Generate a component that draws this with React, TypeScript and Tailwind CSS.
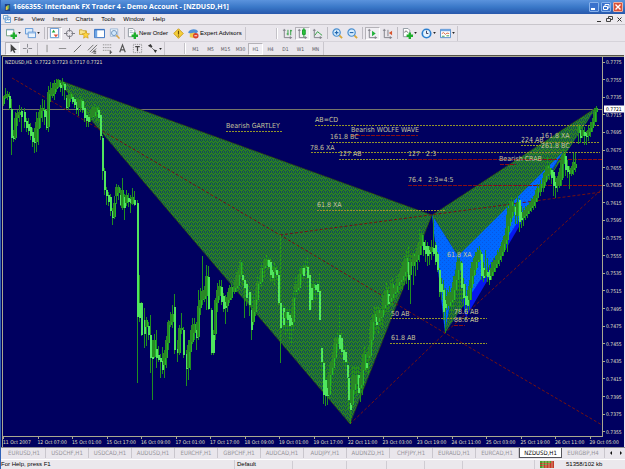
import React, { useState } from 'react';
import clsx from 'clsx';

const menus = ['File', 'View', 'Insert', 'Charts', 'Tools', 'Window', 'Help'];

const periods = ['M1', 'M5', 'M15', 'M30', 'H1', 'H4', 'D1', 'W1', 'MN'];

const tabs = [
  'EURUSD,H1', 'USDCHF,H1', 'USDCAD,H1', 'AUDUSD,H1', 'EURCHF,H1', 'GBPCHF,H1', 'AUDCAD,H1',
  'AUDJPY,H1', 'AUDNZD,H1', 'CHFJPY,H1', 'EURAUD,H1', 'EURCAD,H1', 'NZDUSD,H1', 'EURGBP,H4',
];

const times = [
  '11 Oct 2007', '12 Oct 07:00', '15 Oct 01:00', '15 Oct 17:00', '16 Oct 09:00', '17 Oct 01:00',
  '17 Oct 17:00', '18 Oct 09:00', '19 Oct 01:00', '19 Oct 17:00', '22 Oct 11:00', '23 Oct 03:00',
  '23 Oct 19:00', '24 Oct 11:00', '25 Oct 03:00', '25 Oct 19:00', '26 Oct 11:00', '29 Oct 05:00',
];

const prices = Array.from({ length: 22 }, (_, i) => (0.7775 - i * 0.002).toFixed(4));

// Plot area in chart units
const plot = { x: 3, y: 57, w: 599, h: 379 };

// x, high, low, body top, body bottom
const candles: number[][] = [
  [3, 96, 106, 98, 104], [5, 88, 99, 95, 98], [7, 91, 100, 94, 97], [9, 92, 110, 96, 108], [11, 99, 155, 109, 138],
  [13, 130, 142, 136, 139], [15, 112, 140, 118, 138], [17, 110, 126, 113, 118], [19, 105, 122, 112, 115],
  [21, 107, 132, 111, 117], [24, 108, 128, 112, 122], [26, 118, 132, 121, 128], [28, 118, 135, 124, 131],
  [30, 123, 140, 127, 136], [32, 128, 147, 132, 142], [34, 128, 153, 138, 143], [36, 112, 152, 122, 142],
  [38, 112, 145, 118, 129], [40, 105, 128, 109, 118], [42, 99, 122, 108, 111], [44, 100, 125, 110, 117],
  [46, 110, 130, 111, 128], [48, 86, 132, 92, 127], [50, 82, 102, 90, 94], [52, 83, 98, 88, 96],
  [54, 80, 100, 83, 94], [56, 79, 92, 84, 89], [58, 79, 88, 80, 87], [60, 80, 92, 83, 88],
  [62, 78, 96, 82, 85], [64, 82, 100, 84, 90], [66, 95, 109, 98, 108], [68, 90, 110, 95, 107],
  [70, 92, 102, 94, 99], [72, 95, 104, 97, 102], [74, 97, 108, 99, 105], [76, 98, 114, 102, 110],
  [78, 97, 116, 101, 108], [80, 96, 112, 100, 108], [82, 97, 113, 101, 110], [84, 102, 122, 108, 118],
  [86, 110, 127, 115, 121], [88, 112, 127, 117, 122], [90, 110, 122, 114, 117], [92, 106, 120, 110, 117],
  [94, 104, 118, 108, 116], [96, 105, 122, 108, 112], [98, 105, 122, 110, 118], [100, 112, 140, 115, 136],
  [102, 135, 180, 138, 171], [104, 168, 195, 171, 190], [106, 187, 205, 190, 196], [108, 192, 206, 195, 202],
  [110, 194, 216, 197, 211], [112, 208, 225, 211, 218], [114, 196, 219, 203, 217], [116, 184, 204, 187, 196],
  [118, 185, 200, 187, 193], [120, 188, 206, 195, 205], [122, 178, 210, 190, 208], [124, 194, 220, 197, 208],
  [126, 190, 206, 195, 203], [128, 193, 207, 198, 202], [130, 195, 213, 199, 203], [132, 188, 205, 197, 204],
  [134, 191, 206, 200, 205], [137, 200, 383, 203, 317], [139, 275, 322, 303, 318], [141, 302, 336, 303, 335],
  [144, 308, 348, 320, 334], [146, 317, 346, 320, 327], [148, 322, 340, 326, 335], [150, 315, 373, 335, 358],
  [152, 340, 400, 357, 359], [154, 334, 358, 340, 357], [156, 330, 368, 349, 358], [158, 346, 362, 355, 360],
  [160, 354, 378, 358, 362], [162, 347, 374, 361, 370], [164, 350, 378, 353, 365], [166, 336, 368, 340, 358],
  [168, 320, 350, 322, 343], [170, 312, 327, 321, 325], [172, 305, 328, 314, 322], [174, 294, 354, 307, 350],
  [177, 340, 362, 349, 353], [179, 325, 355, 328, 353], [181, 313, 334, 328, 330], [183, 327, 358, 330, 355],
  [186, 350, 386, 354, 369], [188, 340, 380, 345, 368], [190, 330, 370, 340, 352], [192, 318, 344, 325, 342],
  [194, 318, 340, 324, 333], [196, 322, 350, 330, 338], [198, 290, 340, 306, 337], [200, 288, 315, 300, 308],
  [202, 256, 305, 291, 300], [204, 286, 302, 290, 299], [206, 265, 310, 276, 296], [208, 266, 310, 277, 309],
  [211, 308, 355, 310, 353], [213, 330, 355, 335, 353], [215, 298, 340, 300, 334], [217, 283, 312, 290, 303],
  [219, 280, 300, 286, 296], [221, 280, 305, 287, 302], [223, 293, 312, 296, 309], [225, 295, 324, 302, 308],
  [227, 292, 312, 297, 306], [229, 285, 303, 288, 300], [231, 284, 300, 287, 298], [234, 280, 294, 286, 292],
  [236, 272, 292, 275, 288], [238, 268, 290, 272, 286], [240, 260, 277, 262, 275], [242, 262, 285, 275, 280],
  [244, 276, 318, 280, 288], [246, 282, 306, 284, 298], [249, 290, 316, 292, 305], [251, 294, 340, 310, 330],
  [253, 296, 325, 308, 322], [255, 290, 316, 300, 312], [257, 276, 302, 283, 300], [259, 275, 290, 281, 284],
  [261, 263, 286, 268, 282], [264, 258, 278, 262, 268], [266, 255, 268, 260, 266], [268, 257, 270, 260, 267],
  [270, 258, 282, 262, 275], [272, 265, 282, 270, 278], [274, 262, 285, 268, 272], [276, 265, 280, 270, 275],
  [278, 270, 305, 275, 303], [280, 235, 363, 303, 328], [283, 305, 330, 308, 325], [285, 306, 335, 312, 318],
  [287, 308, 332, 312, 320], [289, 306, 340, 315, 326], [291, 308, 344, 318, 325], [293, 290, 330, 298, 322],
  [295, 275, 300, 284, 292], [297, 275, 295, 284, 290], [299, 267, 292, 274, 288], [301, 266, 282, 268, 274],
  [303, 263, 280, 268, 276], [305, 260, 272, 266, 268], [307, 256, 290, 267, 278], [309, 270, 313, 275, 310],
  [311, 283, 310, 288, 300], [313, 278, 302, 284, 288], [315, 283, 300, 285, 290], [317, 280, 296, 284, 292],
  [319, 273, 322, 291, 320], [321, 346, 372, 348, 362], [323, 360, 404, 363, 395], [325, 370, 406, 380, 396],
  [327, 378, 405, 388, 396], [329, 365, 398, 372, 395], [331, 360, 385, 362, 375], [333, 345, 375, 352, 368],
  [335, 335, 362, 338, 358], [337, 332, 352, 338, 344], [339, 305, 345, 335, 349], [341, 333, 355, 338, 352],
  [343, 345, 365, 350, 360], [345, 348, 370, 352, 362], [347, 360, 390, 365, 378], [348, 377, 410, 378, 400],
  [350, 390, 424, 403, 410], [352, 366, 408, 377, 405], [354, 365, 395, 376, 390], [356, 366, 396, 375, 384],
  [358, 366, 395, 375, 393], [360, 372, 402, 378, 388], [362, 355, 395, 362, 385], [364, 345, 370, 354, 370],
  [366, 352, 372, 363, 368], [368, 345, 375, 352, 358], [370, 320, 360, 327, 356], [372, 315, 345, 322, 340],
  [374, 306, 335, 314, 322], [376, 307, 330, 317, 325], [378, 305, 335, 310, 322], [380, 308, 325, 313, 318],
  [382, 295, 328, 310, 317], [384, 290, 315, 296, 308], [386, 282, 312, 290, 305], [388, 286, 312, 294, 304],
  [390, 280, 306, 296, 302], [392, 277, 306, 284, 298], [394, 285, 300, 288, 294], [396, 276, 298, 284, 292],
  [398, 274, 294, 278, 286], [400, 268, 290, 272, 282], [402, 262, 290, 268, 280], [404, 256, 285, 262, 276],
  [406, 250, 284, 258, 272], [408, 245, 290, 262, 280], [410, 255, 304, 262, 275], [413, 250, 285, 254, 266],
  [415, 252, 276, 256, 262], [417, 245, 270, 248, 260], [419, 228, 262, 242, 255], [421, 232, 255, 235, 246],
  [423, 235, 256, 242, 250], [425, 240, 262, 246, 254], [427, 242, 266, 246, 256], [429, 246, 265, 250, 254],
  [431, 240, 260, 247, 252], [433, 215, 256, 248, 254], [435, 242, 265, 245, 262], [437, 252, 272, 254, 270],
  [439, 268, 297, 270, 292], [441, 278, 300, 284, 292], [443, 280, 320, 290, 312], [445, 288, 333, 300, 308],
  [447, 290, 310, 296, 304], [449, 286, 308, 292, 306], [451, 288, 312, 292, 302], [453, 276, 308, 282, 300],
  [455, 270, 300, 276, 290], [457, 255, 290, 262, 280], [459, 258, 312, 262, 270], [461, 261, 300, 263, 288],
  [463, 278, 306, 284, 298], [465, 284, 312, 296, 305], [467, 290, 314, 296, 306], [469, 280, 310, 286, 300],
  [471, 262, 300, 268, 288], [473, 258, 284, 262, 276], [475, 252, 275, 256, 270], [477, 248, 268, 252, 262],
  [479, 246, 262, 250, 260], [481, 252, 280, 254, 276], [483, 262, 282, 268, 278], [485, 250, 278, 270, 276],
  [487, 258, 282, 272, 277], [489, 265, 285, 270, 280], [491, 262, 280, 268, 276], [493, 258, 276, 262, 272],
  [495, 256, 272, 260, 268], [497, 250, 268, 255, 264], [499, 248, 266, 252, 260], [501, 242, 262, 246, 256],
  [503, 236, 256, 240, 252], [505, 228, 250, 235, 244], [507, 205, 252, 215, 240], [509, 200, 232, 208, 226],
  [511, 198, 222, 202, 218], [513, 200, 216, 206, 212], [515, 204, 224, 207, 215], [517, 196, 224, 202, 216],
  [519, 198, 232, 200, 222], [521, 206, 228, 212, 220], [523, 208, 226, 212, 218], [525, 206, 220, 210, 216],
  [527, 205, 218, 207, 214], [529, 202, 214, 205, 211], [531, 198, 212, 202, 208], [533, 196, 210, 199, 206],
  [535, 190, 208, 195, 202], [537, 184, 202, 188, 198], [540, 180, 196, 184, 192], [543, 173, 192, 178, 188],
  [545, 166, 186, 172, 182], [547, 155, 180, 166, 176], [549, 162, 180, 168, 174], [551, 168, 184, 170, 178],
  [553, 170, 196, 172, 186], [555, 176, 198, 182, 188], [557, 176, 192, 178, 186], [559, 168, 188, 172, 186],
  [561, 156, 186, 160, 180], [563, 150, 178, 154, 164], [565, 152, 176, 156, 170], [567, 160, 178, 166, 172],
  [569, 166, 189, 170, 174], [571, 166, 176, 168, 174], [573, 153, 175, 162, 170], [575, 153, 172, 164, 168],
  [578, 124, 144, 126, 133], [580, 126, 143, 130, 138], [582, 126, 138, 130, 136], [584, 127, 145, 132, 136],
  [586, 131, 145, 133, 137], [588, 126, 141, 130, 136], [590, 122, 137, 128, 132], [592, 118, 132, 122, 128],
  [594, 108, 126, 112, 122], [596, 106, 122, 108, 112],
];

// x1, x2, y of the level lines
const levels = [
  [226, 283, 131], [315, 600, 125], [330, 600, 142], [311, 600, 152], [339, 408, 159],
  [317, 446, 210], [521, 545, 145], [390, 487, 318], [390, 487, 343],
];
const redLevels = [[351, 418, 135], [408, 602, 159], [408, 602, 185], [500, 516, 164], [454, 465, 325]];

const notes: [string, number, number][] = [
  ['Bearish GARTLEY', 226, 126], ['AB=CD', 315, 120], ['Bearish WOLFE WAVE', 351, 130],
  ['161.8 BC', 330, 137], ['78.6 XA', 310, 148], ['127 AB', 339, 154], ['127', 408, 154], ['2:3', 426, 154],
  ['76.4', 408, 180], ['2:3=4:5', 428, 180], ['61.8 XA', 317, 205], ['224 AB', 521, 140],
  ['161.8 XA', 541, 136], ['261.8 BC', 541, 146], ['Bearish CRAB', 499, 159], ['50 AB', 391, 314],
  ['61.8 AB', 391, 338], ['78.6 AB', 454, 312], ['88.6 AB', 454, 320], ['61.8 XA', 447, 255],
];

interface ToolProps {
  label: string;
  pressed?: boolean;
  menu?: boolean;
  children: React.ReactNode;
}

const Tool: React.FC<ToolProps> = ({ label, pressed, menu, children }) => (
  <button
    type="button"
    aria-label={label}
    className={clsx(
      'flex h-[13px] shrink-0 items-center justify-center',
      menu ? 'w-[19px] gap-px' : 'w-[15px]',
      pressed && 'border border-[#b4b2b8] border-r-white border-b-white bg-[#f1eff4]',
    )}
  >
    <svg viewBox="0 0 12 12" className="h-[11px] w-[11px] shrink-0" fill="none">{children}</svg>
    {menu && (
      <svg viewBox="0 0 4 3" className="h-[2px] w-[3px] shrink-0"><path d="M0 0h4L2 3z" fill="#222" /></svg>
    )}
  </button>
);

const Divider = () => <div className="mx-[2px] h-[12px] w-px shrink-0 bg-[#bdbbc2]" />;

const Grip = () => <div className="mx-[2px] h-[11px] w-[2px] shrink-0 border-x border-x-[#c4c2c8] border-r-white" />;

const TitleBar = () => (
  <header className="flex h-[14px] items-center bg-linear-to-b from-[#5b93dd] via-[#3a78c8] to-[#2858ac] pr-[2px] pl-[3px] text-white">
    <svg viewBox="0 0 8 10" className="h-[9px] w-[7px]">
      <path d="M1 1h6v8H1z" fill="#1c3f86" />
      <path d="M2 4l3-2v5l-3 1z" fill="#e8c740" />
      <path d="M4 3l2-1v4H4z" fill="#5fb05a" />
    </svg>
    <h1 className="ml-[2px] flex-1 font-['Open_Sans','Noto_Sans',sans-serif] text-[7px] leading-[10px] font-bold whitespace-nowrap">
      1666355: Interbank FX Trader 4 - Demo Account - [NZDUSD,H1]
    </h1>
    <div className="flex gap-[2px]">
      <button type="button" aria-label="Minimize" className="flex h-[10px] w-[10px] items-end rounded-[1px] border border-[#86b0ea] bg-[#3a72cc] p-px">
        <span className="h-[2px] w-[4px] bg-white" />
      </button>
      <button type="button" aria-label="Restore" className="h-[10px] w-[10px] rounded-[1px] border border-[#86b0ea] bg-[#3a72cc]">
        <svg viewBox="0 0 8 8" fill="none" stroke="#fff"><path d="M3 3V1.5h4V5H5.500M1.500 3.500h4v3h-4z" /></svg>
      </button>
      <button type="button" aria-label="Close" className="h-[10px] w-[10px] rounded-[1px] border border-[#f0b0a0] bg-[#d8523a]">
        <svg viewBox="0 0 8 8" stroke="#fff" strokeWidth="1.400"><path d="M1.500 1.500l5 5M6.500 1.500l-5 5" /></svg>
      </button>
    </div>
  </header>
);

const MenuBar = () => (
  <nav className="flex h-[11px] items-center border-b border-[#c9c6cc] bg-[#ece9ee] pr-[2px] pl-[2px]">
    <svg viewBox="0 0 9 9" className="mr-[3px] h-[8px] w-[8px]" fill="#fff" stroke="#5a96d0">
      <path d="M.5.500h5v4h-5zM2.500 2.500h6v6h-6z" />
      <path d="M4 6.500l1.500-2 1 1.500L8 4" fill="none" />
    </svg>
    <div className="flex flex-1 gap-[8px]">
      {menus.map((item) => (
        <button key={item} type="button" className="leading-[9px]">{item}</button>
      ))}
    </div>
    <div className="flex gap-[3px]">
      <button type="button" aria-label="Minimize chart" className="h-[7px] w-[7px]">
        <svg viewBox="0 0 7 7" stroke="#333"><path d="M1 5.500h4" /></svg>
      </button>
      <button type="button" aria-label="Restore chart" className="h-[7px] w-[7px]">
        <svg viewBox="0 0 7 7" fill="none" stroke="#444"><path d="M2.500 2V.5h4v3H5M.5 2.500h4v3h-4z" /></svg>
      </button>
      <button type="button" aria-label="Close chart" className="h-[7px] w-[7px]">
        <svg viewBox="0 0 7 7" stroke="#333"><path d="M1.500 1.500l4 4M5.500 1.500l-4 4" /></svg>
      </button>
    </div>
  </nav>
);

const axes = <path d="M2.500 1v9.500H11M1 2.500h3M9 9v3" stroke="#7d7d86" />;
const plus = <path d="M8.500 5v7M5 8.500h7" stroke="#1fae2c" strokeWidth="2.600" />;

const StandardBar = () => (
  <div className="flex h-[16px] items-center pl-[3px]">
    <Tool label="New chart" menu>
      <path d="M.5 1.500h8v7h-8z" fill="#fff" stroke="#6d9a7c" />
      <path d="M.5 2h8" stroke="#79a0d8" />
      {plus}
    </Tool>
    <Tool label="Profiles" menu>
      <path d="M.5.500h8v6h-8z" fill="#dcebfb" stroke="#5c94d4" />
      <path d="M3.500 4.500h8v6h-8z" fill="#e9f3fd" stroke="#5c94d4" />
      <path d="M4 5.500h7" stroke="#8ab6e6" />
    </Tool>
    <Divider />
    <Tool label="Market watch" pressed>
      <path d="M1.500.500h9v10h-9z" fill="#fff" stroke="#5c94d4" />
      <path d="M3 5l2-3 2 3z" fill="#21a63a" />
      <path d="M5 7l2.500 3L10 7z" fill="#e0503a" />
    </Tool>
    <Tool label="Data window">
      <circle cx="6" cy="6" r="3.500" stroke="#77777f" />
      <path d="M6 0v4M6 8v4M0 6h4M8 6h4" stroke="#77777f" />
    </Tool>
    <Tool label="Navigator">
      <path d="M.5 2h3l1 1H8v4H.5z" fill="#f8e28a" stroke="#c9a436" />
      <path d="M7.500 3.500l1.200 2.600 2.800.3-2.100 1.900.6 2.800-2.500-1.400L5 11.100l.6-2.800-2.100-1.900 2.800-.3z" fill="#ffd53c" stroke="#c89418" strokeWidth=".7" />
    </Tool>
    <Tool label="Terminal">
      <path d="M.5 1.500h11v9H.5z" fill="#fff" stroke="#2f6cc0" />
      <path d="M1 2h2.500v8H1z" fill="#6fa5e4" />
      <path d="M1 2h10" stroke="#2f6cc0" />
    </Tool>
    <Tool label="Strategy tester">
      <path d="M1.500 1h8v8h-8z" fill="#eef5fd" stroke="#9ab6d4" />
      <circle cx="5.500" cy="5.500" r="2.800" fill="#cfe6fa" stroke="#6f93bb" />
      <path d="M8 8l3.500 3.500" stroke="#d9a441" strokeWidth="1.600" />
    </Tool>
    <Divider />
    <button type="button" className="flex h-[13px] items-center gap-px pr-[3px]">
      <svg viewBox="0 0 12 12" className="h-[11px] w-[11px]" fill="none">
        <path d="M1.500.500h5l2 2v7h-7z" fill="#fff" stroke="#8a949c" />
        <path d="M3 3h3M3 5h4" stroke="#a7b6c6" />
        {plus}
      </svg>
      New Order
    </button>
    <Tool label="MetaEditor">
      <path d="M6 .8L11.200 6 6 11.200.8 6z" fill="#f7cf3a" stroke="#c79a1a" />
      <path d="M6 3v4M6 8.200v1.200" stroke="#6b4d08" strokeWidth="1.300" />
    </Tool>
    <button type="button" className="flex h-[13px] items-center gap-px px-[2px]">
      <svg viewBox="0 0 12 12" className="h-[11px] w-[11px]" fill="none">
        <path d="M0 5c2-4 9-5 11-1L6 8z" fill="#4f8fd6" />
        <path d="M2 6l5-1 2 3-3 3-4-1z" fill="#f0c84a" />
        <circle cx="8.500" cy="8.500" r="3" fill="#d8402c" />
        <path d="M7 8.500h3" stroke="#fff" />
      </svg>
      Expert Advisors
    </button>
    <div className="ml-px h-[13px] w-px bg-[#c9c6cd]" />
    <div className="w-[28px]" />
    <Grip />
    <Tool label="Bar chart">
      {axes}
      <path d="M6.500 2v6M9.500 2v6M5 6.500h2M9 3h2" stroke="#2a9c3a" />
    </Tool>
    <Tool label="Candlesticks" pressed>
      {axes}
      <path d="M7.500 0v10" stroke="#159a2a" />
      <path d="M6 2h3v5H6z" fill="#2cc43c" stroke="#159a2a" />
    </Tool>
    <Tool label="Line chart">
      {axes}
      <path d="M3 8l3-4 2.500 2 2.500 2" stroke="#2a9c3a" />
    </Tool>
    <Divider />
    <Tool label="Zoom in">
      <path d="M7.500 7.500L11 11" stroke="#d9a83a" strokeWidth="2" />
      <circle cx="5" cy="5" r="4" fill="#d5ebfc" stroke="#4a8fd0" strokeWidth="1.300" />
      <path d="M3 5h4M5 3v4" stroke="#2467b0" strokeWidth="1.200" />
    </Tool>
    <Tool label="Zoom out">
      <path d="M7.500 7.500L11 11" stroke="#d9a83a" strokeWidth="2" />
      <circle cx="5" cy="5" r="4" fill="#d5ebfc" stroke="#4a8fd0" strokeWidth="1.300" />
      <path d="M3 5h4" stroke="#2467b0" strokeWidth="1.200" />
    </Tool>
    <Divider />
    <Tool label="Auto scroll" pressed>
      {axes}
      <path d="M5.500 3v6L9.500 6z" fill="#20b23a" />
    </Tool>
    <Tool label="Chart shift">
      {axes}
      <path d="M6.500 2v7" stroke="#7d7d86" />
      <path d="M11 3v5L7.500 5.500z" fill="#d8542c" />
    </Tool>
    <Divider />
    <Tool label="Indicators" menu>
      <path d="M1.500.500h5l2 2v7h-7z" fill="#fff" stroke="#8a949c" />
      <path d="M3 5c1-3 2-2 3 0" stroke="#555" />
      {plus}
    </Tool>
    <Tool label="Periods" menu>
      <circle cx="6" cy="6" r="4.600" fill="#e6f3fe" stroke="#2c7fd0" strokeWidth="1.800" />
      <path d="M6 3v3h2" stroke="#335" />
    </Tool>
    <Tool label="Templates" menu>
      <path d="M.5 1.500h11v9H.5z" fill="#fff" stroke="#4f8acb" />
      <path d="M1 2.500h10" stroke="#6fa5e4" strokeWidth="2" />
      <path d="M2 6l2-1 2 2 1.500-1.500L10 6" stroke="#d0643c" />
      <path d="M2 9h3M7 8.500h3" stroke="#3a9c4c" />
    </Tool>
    <div className="h-[15px] w-px bg-[#c9c6cd]" />
  </div>
);

const DrawingBar = () => {
  const [period, setPeriod] = useState('H1');

  return (
    <div className="flex h-[14px] items-center border-t border-[#d6d3da] pl-[4px] text-[#55555c]">
      <Tool label="Cursor" pressed>
        <path d="M4 1v9l2.200-2 1.500 3 1.500-.8L7.800 7.500h3z" fill="#444" />
      </Tool>
      <Tool label="Crosshair"><path d="M6 1v4M6 7v4M1 6h4M7 6h4" stroke="#85858c" /></Tool>
      <Divider />
      <Tool label="Vertical line"><path d="M5.500 2v8" stroke="#888" /></Tool>
      <Tool label="Horizontal line"><path d="M2 6h8" stroke="#888" /></Tool>
      <Tool label="Trendline"><path d="M2 10l8-8" stroke="#666" /></Tool>
      <Tool label="Channel">
        <path d="M1 8l6-6M3 10l8-8M5 11l5-5" stroke="#666" />
        <path d="M7 9h3M7 11h3" stroke="#333" />
      </Tool>
      <Tool label="Fibonacci">
        <path d="M1 2h10M1 5h10M1 8h7" stroke="#777" strokeDasharray="1 1" />
        <path d="M9 8v4M9 10h2" stroke="#333" />
      </Tool>
      <Tool label="Text"><path d="M3 10l3-8 3 8M4 7.500h4" stroke="#555" strokeWidth="1.300" /></Tool>
      <Tool label="Text label">
        <path d="M1.500 1.500h9v9h-9z" stroke="#888" strokeDasharray="1 1" />
        <path d="M3.500 4h5M6 4v5" stroke="#444" strokeWidth="1.300" />
      </Tool>
      <Tool label="Arrows" menu>
        <path d="M1 3l3-2 2 3-2 1z" fill="#333" />
        <path d="M4 4l5 5" stroke="#777" />
        <path d="M7 7l4 1-2 3z" fill="#333" />
      </Tool>
      <div className="h-[13px] w-px bg-[#c9c6cd]" />
      <div className="w-[17px]" />
      <Grip />
      {periods.map((p) => (
        <button
          key={p}
          type="button"
          onClick={() => setPeriod(p)}
          className={clsx(
            'h-[12px] w-[15px] font-["DejaVu_Sans_Condensed","DejaVu_Sans",sans-serif] text-[5px] leading-[10px]',
            p === period && 'border border-[#b4b2b8] border-r-white border-b-white bg-[#f1eff4]',
          )}
        >
          {p}
        </button>
      ))}
      <div className="h-[13px] w-px bg-[#c9c6cd]" />
    </div>
  );
};

const Candles = () => (
  <g shapeRendering="crispEdges">
    {candles.map(([x, high, low, top, bottom], i) => {
      const prev = candles[i - 1];
      const falling = prev ? top + bottom > prev[3] + prev[4] : false;
      return (
        <g key={x}>
          <rect x={x} y={high} width="1" height={low - high} fill="#1f8f20" />
          <rect
            x={falling ? x : x - 1}
            y={top}
            width="2"
            height={bottom - top}
            fill={falling ? '#50e65e' : '#2a8726'}
          />
          {!falling && <rect x={x + 1} y={top} width="1" height={bottom - top} fill="#25b82a" />}
        </g>
      );
    })}
  </g>
);

const Plot = () => (
  <div className="relative flex-1 overflow-hidden border-r border-b border-[#a8a890]">
    <svg
      viewBox={`${plot.x} ${plot.y} ${plot.w} ${plot.h}`}
      preserveAspectRatio="none"
      className="absolute inset-0 h-full w-full"
      fill="none"
    >
      <defs>
        <pattern id="mesh" width="4" height="4" patternUnits="userSpaceOnUse">
          <rect width="4" height="4" fill="#2c821f" />
          <path d="M0 0h1v1H0zM2 0h1v1H2zM1 1h1v1H1zM3 2h1v1H3zM0 3h1v1H0zM2 3h1v1H2z" fill="#0f4a5c" shapeRendering="crispEdges" />
        </pattern>
        <pattern id="dots" width="4" height="4" patternUnits="userSpaceOnUse">
          <rect width="4" height="4" fill="#0068ff" />
          <path d="M0 0h1v1H0zM2 2h1v1H2z" fill="#0a55e0" shapeRendering="crispEdges" />
        </pattern>
      </defs>

      <path d="M3 109.500H602" stroke="#75756a" />

      {/* Gartley, crab and butterfly bodies */}
      <path d="M56 79L432 215 350 424z" fill="url(#mesh)" />
      <path d="M432 215L597 107 445 333 458 256z" fill="url(#mesh)" />
      <path d="M563 152L466 317 462 300z" fill="#0618f0" />
      <path d="M432 215L458 256 445 333z" fill="url(#dots)" />
      <path d="M458 256L563 152 466 302z" fill="url(#dots)" />
      <path d="M56 79L432 215M432 215L597 107M56 79L350 424L432 215" stroke="#2c3410" strokeWidth=".6" />

      <g stroke="#741210" strokeDasharray="3 2">
        <path d="M12 78L280 235 445 333 602 425" />
        <path d="M280 235L602 192" />
        <path d="M350 424L445 333 602 189" />
      </g>

      <g stroke="#94942a" strokeDasharray="2 1" shapeRendering="crispEdges">
        {levels.map(([x1, x2, y]) => <path key={`${x1}-${y}`} d={`M${x1} ${y + 0.5}H${x2}`} />)}
      </g>
      <g stroke="#8a0e14" strokeDasharray="4 1" shapeRendering="crispEdges">
        {redLevels.map(([x1, x2, y]) => <path key={`${x1}-${y}`} d={`M${x1} ${y + 0.5}H${x2}`} />)}
      </g>

      <Candles />
    </svg>

    <p className="absolute top-[2px] left-[2px] font-['DejaVu_Sans_Condensed','DejaVu_Sans',sans-serif] text-[5px] leading-[6px] whitespace-pre text-[#e6e6c8]">
      {'NZDUSD,H1  0.7722 0.7723 0.7717 0.7721'}
    </p>
    {notes.map(([text, x, y]) => (
      <span
        key={`${text}-${x}`}
        className="absolute -translate-y-1/2 font-['DejaVu_Sans_Condensed','DejaVu_Sans',sans-serif] text-[7px] leading-[8px] whitespace-nowrap text-[#c4c49c]"
        style={{ left: `${((x - plot.x) / plot.w) * 100}%`, top: `${((y - plot.y) / plot.h) * 100}%` }}
      >
        {text}
      </span>
    ))}
  </div>
);

const PriceScale = () => (
  <div className="relative flex w-[21px] flex-col justify-between pt-[2px] pb-[2px] font-['DejaVu_Sans_Condensed','DejaVu_Sans',sans-serif] text-[5px] text-[#e0e0ca]">
    {prices.map((price) => (
      <span key={price} className="flex items-center gap-px leading-[6px]">
        <span className="h-px w-[2px] bg-[#a8a890]" />
        {price}
      </span>
    ))}
    <span
      className="absolute right-0 left-[1px] -translate-y-1/2 bg-white pl-[2px] leading-[7px] text-black"
      style={{ top: `${((109 - plot.y) / plot.h) * 100}%` }}
    >
      0.7721
    </span>
  </div>
);

const TimeScale = () => (
  <div className="grid h-[10px] grid-cols-18 font-['DejaVu_Sans_Condensed','DejaVu_Sans',sans-serif] text-[5px] text-[#e0e0ca]">
    {times.map((time) => (
      <div key={time} className="min-w-0">
        <div className="h-[2px] w-px bg-[#a8a890]" />
        <div className="leading-[6px] whitespace-nowrap">{time}</div>
      </div>
    ))}
  </div>
);

const ChartTabs = () => {
  const [active, setActive] = useState('NZDUSD,H1');

  return (
    <div className="flex h-[12px] items-start border-t border-[#8f8d94] bg-[#e9e6ec] pl-[2px]">
      <div role="tablist" className="flex min-w-0 flex-1 overflow-hidden font-['DejaVu_Sans_Condensed','DejaVu_Sans',sans-serif]">
        {tabs.map((tab) => (
          <button
            key={tab}
            type="button"
            role="tab"
            aria-selected={tab === active}
            onClick={() => setActive(tab)}
            className={clsx(
              'h-[10px] w-[43px] shrink-0 leading-[10px]',
              tab === active
                ? 'border-r border-b border-l border-[#55555c] bg-white text-black'
                : 'border-r border-[#c9c6cd] text-[#96949a]',
            )}
          >
            {tab}
          </button>
        ))}
      </div>
      <button type="button" aria-label="Scroll tabs left" className="h-[10px] w-[9px]">
        <svg viewBox="0 0 9 10"><path d="M5 3v4L3 5z" fill="#111" /></svg>
      </button>
      <button type="button" aria-label="Scroll tabs right" className="h-[10px] w-[9px]">
        <svg viewBox="0 0 9 10"><path d="M4 3v4l2-2z" fill="#111" /></svg>
      </button>
    </div>
  );
};

const StatusBar = () => (
  <footer className="flex h-[10px] items-center border-t border-white bg-[#ebe8ed] leading-[9px]">
    <span className="flex-1 whitespace-nowrap">For Help, press F1</span>
    <span className="w-[58px] border-l border-[#cfccd3] pl-[2px]">Default</span>
    <span className="h-[8px] w-[54px] border-l border-[#cfccd3]" />
    <span className="h-[8px] w-[40px] border-l border-[#cfccd3]" />
    <span className="h-[8px] w-[38px] border-l border-[#cfccd3]" />
    <span className="h-[8px] w-[38px] border-l border-[#cfccd3]" />
    <span className="h-[8px] w-[72px] border-l border-[#cfccd3]" />
    <span className="flex w-[91px] items-center gap-[12px] border-l border-[#cfccd3] pl-[5px]">
      <svg viewBox="0 0 14 7" className="h-[7px] w-[14px]">
        <path d="M0 0h14v7H0z" fill="#c23a2c" />
        <path d="M0 0h11v2H0zM0 3h8v1H0zM0 5h4v2H0z" fill="#4c9c2c" />
        <path d="M3 0v7M6 0v7M9 0v7M12 0v7" stroke="#e8d8a0" strokeWidth=".6" />
      </svg>
      51358/102 kb
    </span>
  </footer>
);

export default function App() {
  return (
    <div className="flex min-h-screen flex-col border-l border-[#2f62b8] bg-[#e9e6ec] font-['Liberation_Sans',Arial,sans-serif] text-[6px] text-black">
      <TitleBar />
      <MenuBar />
      <StandardBar />
      <DrawingBar />
      <main className="mr-px flex flex-1 flex-col border-t border-[#55534a] bg-[#000060]">
        <div className="ml-px flex flex-1 flex-col border-t border-l border-[#a8a890]">
          <div className="flex flex-1">
            <Plot />
            <PriceScale />
          </div>
          <TimeScale />
        </div>
      </main>
      <ChartTabs />
      <StatusBar />
    </div>
  );
}
